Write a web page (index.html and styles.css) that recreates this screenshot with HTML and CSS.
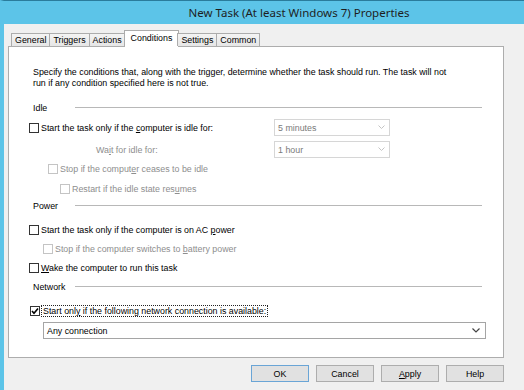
FILE: index.html
```html
<!DOCTYPE html>
<html lang="en">
<head>
  <meta charset="UTF-8">
  <title>New Task (At least Windows 7) Properties</title>
  <link rel="stylesheet" href="styles.css">
</head>
<body>

<div class="window">
  <div class="titlebar">New Task (At least Windows 7) Properties</div>

  <div class="client">
    <div class="tabs">
      <div class="tab">General</div>
      <div class="tab">Triggers</div>
      <div class="tab">Actions</div>
      <div class="tab active">Conditions</div>
      <div class="tab">Settings</div>
      <div class="tab">Common</div>
    </div>

    <div class="panel">
      <p class="intro">Specify the conditions that, along with the trigger, determine whether the task should run. The task will not<br>run if any condition specified here is not true.</p>

      <div class="group idle"><span>Idle</span><i></i></div>
      <div class="row first">
        <label class="lead"><span class="box"></span><span>Start the task only if the <u>c</u>omputer is idle for:</span></label>
        <div class="combo">5 minutes<svg width="7" height="5" viewBox="0 0 7 5"><polyline points="0.5,0.5 3.5,3.5 6.5,0.5" fill="none" stroke="#c4c4c4" stroke-width="1"/></svg></div>
      </div>
      <div class="row second">
        <label class="lead wait off"><span>Wa<u>i</u>t for idle for:</span></label>
        <div class="combo">1 hour<svg width="7" height="5" viewBox="0 0 7 5"><polyline points="0.5,0.5 3.5,3.5 6.5,0.5" fill="none" stroke="#c4c4c4" stroke-width="1"/></svg></div>
      </div>
      <label class="row off stop"><span class="box"></span><span>Stop if the comput<u>e</u>r ceases to be idle</span></label>
      <label class="row off restart"><span class="box"></span><span>Restart if the idle state res<u>u</u>mes</span></label>

      <div class="group power"><span>Power</span><i></i></div>
      <label class="row ac"><span class="box"></span><span>Start the task only if the computer is on AC <u>p</u>ower</span></label>
      <label class="row off battery"><span class="box"></span><span>Stop if the computer switches to <u>b</u>attery power</span></label>
      <label class="row"><span class="box"></span><span><u>W</u>ake the computer to run this task</span></label>

      <div class="group network"><span>Network</span><i></i></div>
      <label class="row net">
        <span class="box"><svg width="8" height="8" viewBox="0 0 8 8"><polyline points="1,4 3,6.3 7,1.5" fill="none" stroke="#000" stroke-width="1.6"/></svg></span>
        <span class="focus">Start onl<u>y</u> if the following network connection is available:</span>
      </label>
      <div class="combo wide">Any connection<svg width="8" height="5" viewBox="0 0 8 5"><polyline points="0.5,0.5 4,4 7.5,0.5" fill="none" stroke="#444" stroke-width="1.2"/></svg></div>
    </div>

    <div class="buttons">
      <button class="default">OK</button>
      <button>Cancel</button>
      <button><u>A</u>pply</button>
      <button>Help</button>
    </div>
  </div>
</div>

</body>
</html>
```

FILE: styles.css
```css
* { box-sizing: border-box; }
body { margin: 0; font-family: "Liberation Sans", Arial, sans-serif; font-size: 8.85px; color: #000; background: #f0f0f0; }
u { text-underline-offset: 1px; }

.window { width: 524px; height: 390px; border-left: 4px solid #5cc4e8; border-top: 1px solid #2a7c9c; background: #f0f0f0; overflow: hidden; }
.titlebar { height: 23px; padding-left: 70px; background: #5cc4e8; text-align: center; font-family: "Noto Sans", sans-serif; font-size: 11.5px; line-height: 23px; color: #1e1e1e; }

.client { padding: 6px 0 0 4px; }

.tabs { display: flex; align-items: flex-end; height: 17px; margin: 0 0 -1px 3px; }
.tab { height: 13px; margin: 0 0 1px -1px; padding: 0 3px; border: 1px solid #acacac; border-bottom: 0; background: linear-gradient(#f4f4f4, #e6e6e6); line-height: 12px; }
.tab:first-child { margin-left: 0; }
.tab.active { height: 17px; margin: 0 -1px 0 -2px; padding: 0 6px; background: #fff; line-height: 14px; }

.panel { width: 496px; height: 312px; border: 1px solid #adadad; background: #fff; padding: 20px 21px 0 20px; }
.intro { margin: 0 0 0 4px; line-height: 11px; }

.group { display: flex; align-items: center; height: 13px; margin-left: 4px; }
.group span { width: 42px; }
.group i { flex: 1; border-top: 1px solid #b8b8b8; }
.idle { margin-top: 12px; }
.power { margin-top: 1px; }
.network { margin-top: 3px; }

.row { display: flex; align-items: center; height: 19px; }
.first { margin-top: 4px; }
.second { margin-top: 3px; }
.restart { margin-top: 1px; }
.ac { margin-top: 8px; }
.net { margin-top: 8px; margin-left: 1px; }

.box { display: flex; align-items: center; justify-content: center; flex: none; width: 10px; height: 10px; margin-right: 2px; border: 1px solid #333; background: #fff; }
.off { color: #8e8e8e; }
.off .box { border-color: #c4c4c4; }
.stop { padding-left: 19px; }
.restart { padding-left: 31px; }
.battery { padding-left: 14px; }

.lead { display: flex; align-items: center; width: 245px; }
.wait { padding-left: 67px; }

.combo { display: flex; align-items: center; justify-content: space-between; width: 116px; height: 17px; padding: 0 4px 0 3px; border: 1px solid #d6d6d6; background: #fff; color: #7a7a7a; }
.combo.wide { width: 443px; margin: 2px 0 0 14px; border-color: #a5a5a5; color: #000; padding-right: 5px; }

.net .box { margin-right: 1px; }
.focus { padding: 0 1px; border: 1px dotted #222; line-height: 10px; }

.buttons { display: flex; justify-content: flex-end; gap: 7px; width: 496px; margin-top: 7px; }
.buttons button { width: 58px; height: 17px; padding: 0; border: 1px solid #adadad; background: #e1e1e1; font: inherit; color: #000; }
.buttons .default { border-color: #6aa5d6; }
```
